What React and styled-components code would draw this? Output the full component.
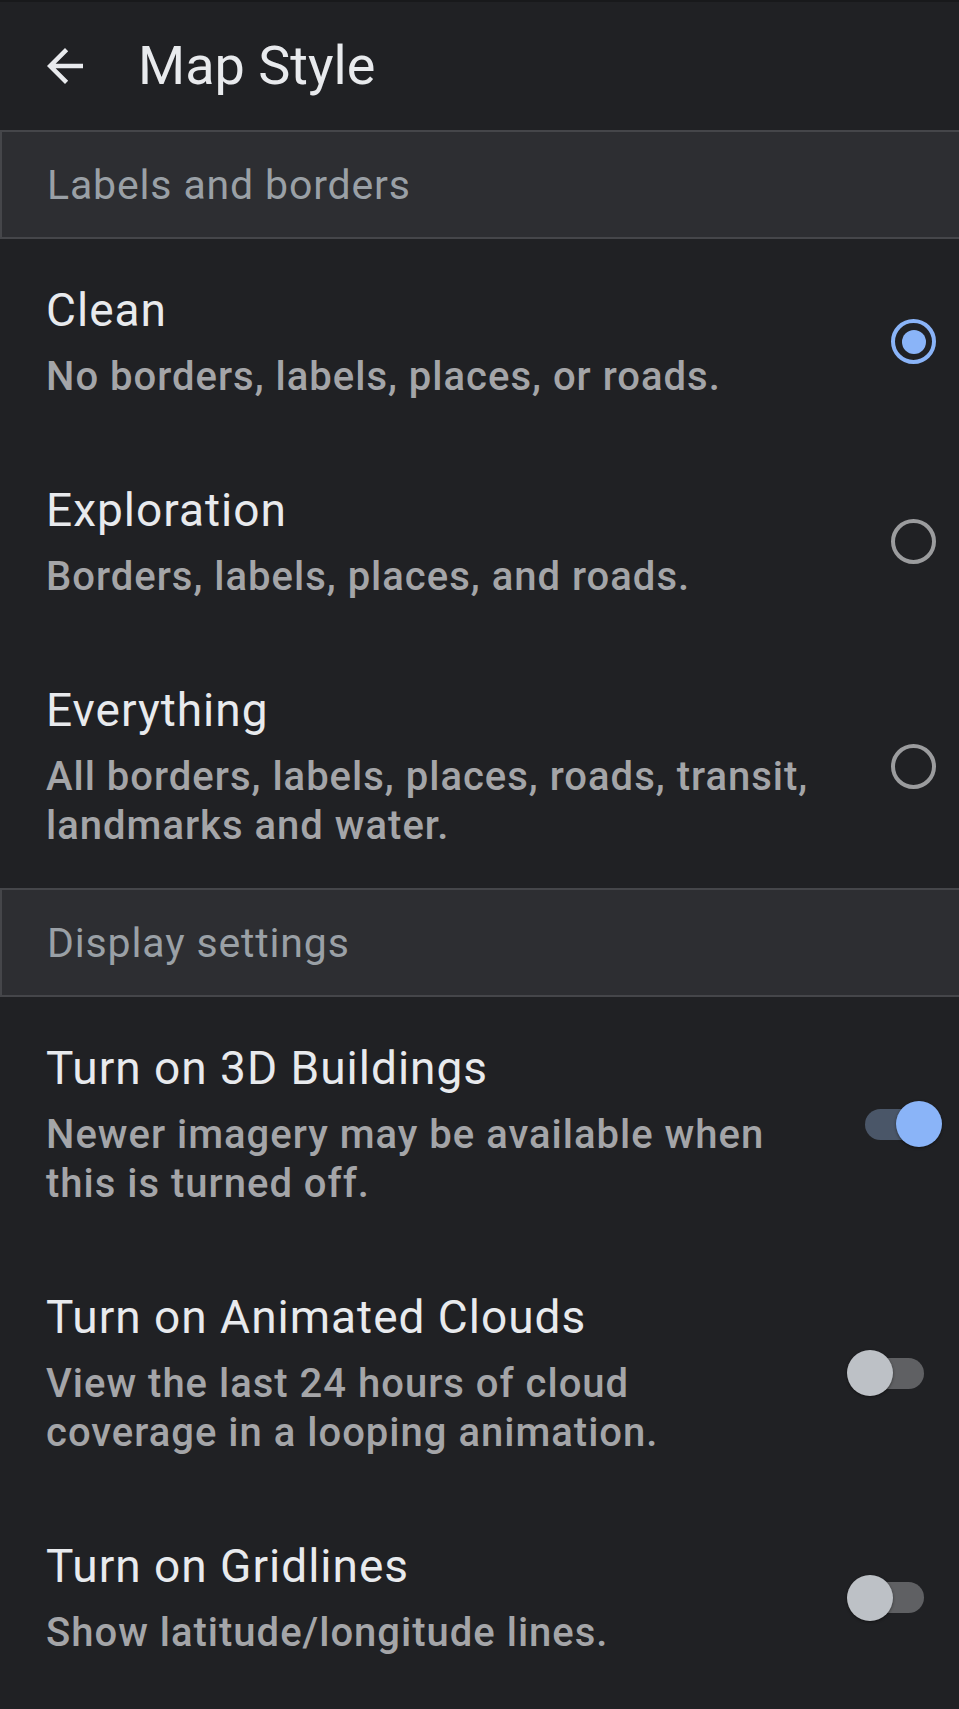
import React from "react";
import styled, { createGlobalStyle } from "styled-components";

const GlobalStyle = createGlobalStyle`
  html, body {
    margin: 0;
    padding: 0;
    background: #202124;
  }
  * { box-sizing: border-box; }
`;

const Page = styled.div`
  width: 959px;
  min-height: 1709px;
  background: #202124;
  border-top: 2px solid #18191b;
  font-family: Roboto, "Liberation Sans", sans-serif;
  overflow: hidden;
`;

const Header = styled.header`
  height: 128px;
  display: flex;
  align-items: center;
  padding-left: 38px;
  gap: 46px;
`;

const BackButton = styled.button`
  width: 54px;
  height: 54px;
  padding: 0;
  border: 0;
  background: transparent;
  color: #e8eaed;
  display: flex;
  align-items: center;
  justify-content: center;
  svg { display: block; }
`;

const HeaderTitle = styled.h1`
  margin: 0;
  font-size: 54px;
  font-weight: 400;
  line-height: 64px;
  color: #e8eaed;
  letter-spacing: 0;
`;

const SectionBand = styled.div`
  height: 109px;
  display: flex;
  align-items: center;
  padding-left: 45px;
  background: #2d2e32;
  border-top: 2px solid #45464a;
  border-bottom: 2px solid #45464a;
  border-left: 2px solid #45464a;
  font-size: 41px;
  letter-spacing: 0.85px;
  color: #9aa0a6;
`;

const Row = styled.div`
  display: flex;
  align-items: center;
  justify-content: space-between;
  gap: 40px;
  padding: 43px ${(p) => p.$pr}px 38px 46px;
`;

const TextCol = styled.div`
  flex: 1;
  min-width: 0;
  max-width: ${(p) => p.$max}px;
`;

const Title = styled.div`
  font-size: 46px;
  line-height: 56px;
  letter-spacing: 1px;
  color: #e8eaed;
  font-weight: 400;
`;

const Subtitle = styled.div`
  margin-top: 14px;
  font-size: 40px;
  line-height: 49px;
  letter-spacing: 1px;
  color: #a4a5a8;
  font-weight: 500;
`;

const Radio = styled.span`
  flex: none;
  width: 45px;
  height: 45px;
  border-radius: 50%;
  border: 4.5px solid ${(p) => (p.$checked ? "#8ab4f8" : "#9b9c9e")};
  display: flex;
  align-items: center;
  justify-content: center;
  &::after {
    content: "";
    width: 24px;
    height: 24px;
    border-radius: 50%;
    background: #8ab4f8;
    display: ${(p) => (p.$checked ? "block" : "none")};
  }
`;

const SwitchBox = styled.span`
  flex: none;
  position: relative;
  width: 77px;
  height: 46px;
  margin-right: ${(p) => (p.$on ? 0 : 18)}px;
`;

const Track = styled.span`
  position: absolute;
  top: 7.5px;
  ${(p) => (p.$on ? "left: 0;" : "right: 0;")}
  width: 70px;
  height: 31px;
  border-radius: 16px;
  background: ${(p) => (p.$on ? "#4a5668" : "#5f6063")};
`;

const Thumb = styled.span`
  position: absolute;
  top: 0;
  ${(p) => (p.$on ? "right: 0;" : "left: 0;")}
  width: 46px;
  height: 46px;
  border-radius: 50%;
  background: ${(p) => (p.$on ? "#8ab4f8" : "#bdc1c6")};
  box-shadow: 0 1px 3px rgba(0, 0, 0, 0.45);
`;

function BackArrow() {
  return (
    <svg width="54" height="54" viewBox="0 0 24 24" fill="currentColor">
      <path d="M20 11H7.83l5.59-5.59L12 4l-8 8 8 8 1.41-1.41L7.83 13H20v-2z" />
    </svg>
  );
}

function Switch({ on }) {
  return (
    <SwitchBox $on={on}>
      <Track $on={on} />
      <Thumb $on={on} />
    </SwitchBox>
  );
}

const styles = [
  { title: "Clean", sub: "No borders, labels, places, or roads.", checked: true },
  { title: "Exploration", sub: "Borders, labels, places, and roads.", checked: false },
  {
    title: "Everything",
    sub: "All borders, labels, places, roads, transit, landmarks and water.",
    checked: false,
  },
];

const settings = [
  {
    title: "Turn on 3D Buildings",
    sub: "Newer imagery may be available when this is turned off.",
    on: true,
  },
  {
    title: "Turn on Animated Clouds",
    sub: "View the last 24 hours of cloud coverage in a looping animation.",
    on: false,
  },
  { title: "Turn on Gridlines", sub: "Show latitude/longitude lines.", on: false },
];

export default function App() {
  return (
    <>
      <GlobalStyle />
      <Page>
        <Header>
          <BackButton aria-label="Back">
            <BackArrow />
          </BackButton>
          <HeaderTitle>Map Style</HeaderTitle>
        </Header>

        <SectionBand>Labels and borders</SectionBand>
        {styles.map((s) => (
          <Row key={s.title} $pr={23}>
            <TextCol $max={790}>
              <Title>{s.title}</Title>
              <Subtitle>{s.sub}</Subtitle>
            </TextCol>
            <Radio $checked={s.checked} />
          </Row>
        ))}

        <SectionBand>Display settings</SectionBand>
        {settings.map((s) => (
          <Row key={s.title} $pr={17}>
            <TextCol $max={750}>
              <Title>{s.title}</Title>
              <Subtitle>{s.sub}</Subtitle>
            </TextCol>
            <Switch on={s.on} />
          </Row>
        ))}
      </Page>
    </>
  );
}
